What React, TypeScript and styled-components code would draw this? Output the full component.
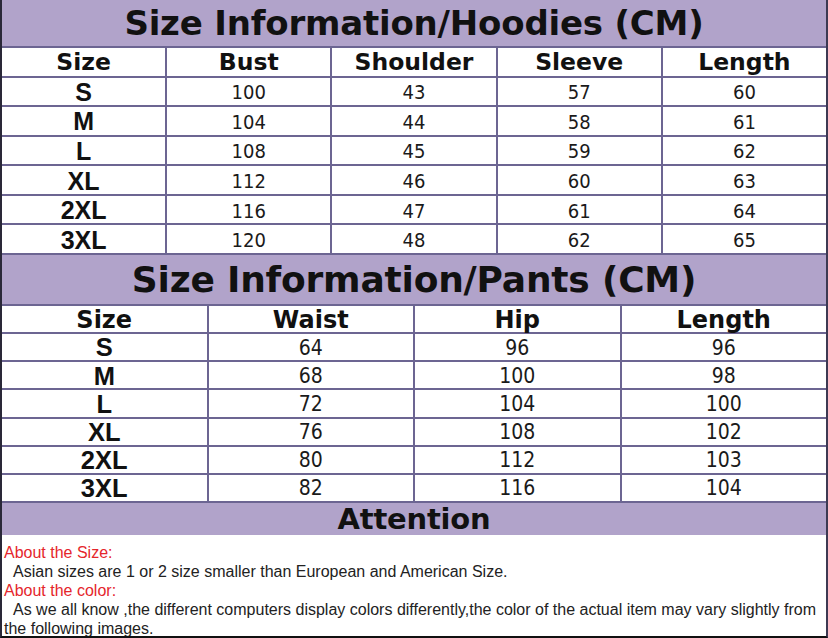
import React from 'react';
import styled, { createGlobalStyle } from 'styled-components';

const GlobalStyle = createGlobalStyle`
  html, body {
    margin: 0;
    padding: 0;
    background: #ffffff;
  }
`;

const LINE = '#6c6592';
const PURPLE = '#b1a3ca';

const hoodies = [
    ['S', 100, 43, 57, 60],
    ['M', 104, 44, 58, 61],
    ['L', 108, 45, 59, 62],
    ['XL', 112, 46, 60, 63],
    ['2XL', 116, 47, 61, 64],
    ['3XL', 120, 48, 62, 65],
];

const pants = [
    ['S', 64, 96, 96],
    ['M', 68, 100, 98],
    ['L', 72, 104, 100],
    ['XL', 76, 108, 102],
    ['2XL', 80, 112, 103],
    ['3XL', 82, 116, 104],
];

const Page = styled.div`
    width: 828px;
    height: 638px;
    box-sizing: border-box;
    border-left: 2px solid #2a2838;
    border-right: 2px solid #3d3952;
    border-bottom: 2px solid #111111;
    display: flex;
    flex-direction: column;
    overflow: hidden;
`;

const Band = styled.div<{ h: number; size: number; line?: boolean }>`
    height: ${p => p.h}px;
    flex: none;
    box-sizing: border-box;
    background: ${PURPLE};
    border-bottom: ${p => (p.line ? `2px solid ${LINE}` : 'none')};
    display: flex;
    align-items: center;
    justify-content: center;
    font-family: "DejaVu Sans", Verdana, sans-serif;
    font-weight: bold;
    font-size: ${p => p.size}px;
    color: #111111;
    letter-spacing: -0.2px;
`;

const Grid = styled.div<{ cols: number; h: number }>`
    height: ${p => p.h}px;
    flex: none;
    box-sizing: border-box;
    display: grid;
    grid-template-columns: repeat(${p => p.cols}, 1fr);
    grid-template-rows: repeat(7, minmax(0, 1fr));
    gap: 2px;
    background: ${LINE};
    border-bottom: 2px solid ${LINE};
`;

const Cell = styled.div`
    background: #ffffff;
    display: flex;
    align-items: center;
    justify-content: center;
    padding-top: 2px;
    box-sizing: border-box;
    color: #111111;
    line-height: 1;
`;

const HeadCell = styled(Cell)<{ size: number }>`
    font-family: "DejaVu Sans", Verdana, sans-serif;
    font-weight: bold;
    font-size: ${p => p.size}px;
`;

const SizeCell = styled(Cell)<{ size: number }>`
    font-family: "Liberation Sans", Arial, sans-serif;
    font-weight: bold;
    font-size: ${p => p.size}px;
`;

const NumCell = styled(Cell)<{ size: number }>`
    font-family: "DejaVu Sans Condensed", "DejaVu Sans", Tahoma, sans-serif;
    font-size: ${p => p.size}px;
    color: #1a1a1a;
`;

const Notes = styled.div`
    flex: 1;
    padding: 8px 0 0 2px;
    font-family: "Liberation Sans", Arial, sans-serif;
    font-size: 16px;
    line-height: 19px;
    color: #222222;
`;

const Label = styled.div`
    color: #e5262b;
`;

const Line = styled.div<{ indent?: boolean }>`
    padding-left: ${p => (p.indent ? '9px' : '0')};
    white-space: nowrap;
`;

const SizeTable = ({
    heads,
    rows,
    h,
    headSize,
    sizeSize,
    numSize,
}: {
    heads: string[];
    rows: (string | number)[][];
    h: number;
    headSize: number;
    sizeSize: number;
    numSize: number;
}) => (
    <Grid cols={heads.length} h={h}>
        {heads.map(head => (
            <HeadCell key={head} size={headSize}>{head}</HeadCell>
        ))}
        {rows.map(row =>
            row.map((v, i) =>
                i === 0
                    ? <SizeCell key={`${row[0]}-${i}`} size={sizeSize}>{v}</SizeCell>
                    : <NumCell key={`${row[0]}-${i}`} size={numSize}>{v}</NumCell>
            )
        )}
    </Grid>
);

export default function App() {
    return (
        <>
            <GlobalStyle />
            <Page>
                <Band h={48} size={34} line>Size Information/Hoodies (CM)</Band>
                <SizeTable
                    heads={['Size', 'Bust', 'Shoulder', 'Sleeve', 'Length']}
                    rows={hoodies}
                    h={207}
                    headSize={23.5}
                    sizeSize={25}
                    numSize={20}
                />
                <Band h={51} size={36} line>Size Information/Pants (CM)</Band>
                <SizeTable
                    heads={['Size', 'Waist', 'Hip', 'Length']}
                    rows={pants}
                    h={197}
                    headSize={24}
                    sizeSize={25.5}
                    numSize={21}
                />
                <Band h={32} size={29}>Attention</Band>
                <Notes>
                    <Label>About the Size:</Label>
                    <Line indent>Asian sizes are 1 or 2 size smaller than European and American Size.</Line>
                    <Label>About the color:</Label>
                    <Line indent>As we all know ,the different computers display colors differently,the color of the actual item may vary slightly from</Line>
                    <Line>the following images.</Line>
                </Notes>
            </Page>
        </>
    );
}
